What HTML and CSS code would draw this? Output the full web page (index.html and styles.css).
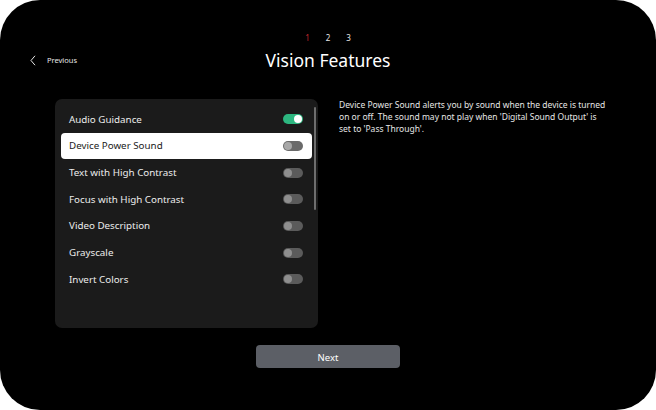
FILE: index.html
```html
<!DOCTYPE html>
<html>
<head>
<meta charset="utf-8">
<link rel="stylesheet" href="styles.css">
</head>
<body>
<div class="screen">
  <div class="steps">
    <span class="step active">1</span>
    <span class="step">2</span>
    <span class="step">3</span>
  </div>
  <div class="header">
    <div class="back">
      <svg class="chev" width="6" height="11" viewBox="0 0 6 11"><path d="M5 0.8 L1 5.5 L5 10.2" fill="none" stroke="#e6e6e6" stroke-width="1"/></svg>
      <span class="back-label">Previous</span>
    </div>
    <h1 class="title">Vision Features</h1>
    <div></div>
  </div>
  <div class="main">
    <div class="panel">
      <div class="row"><span class="label">Audio Guidance</span><span class="toggle on"></span></div>
      <div class="row focused"><span class="label">Device Power Sound</span><span class="toggle"></span></div>
      <div class="row"><span class="label">Text with High Contrast</span><span class="toggle"></span></div>
      <div class="row"><span class="label">Focus with High Contrast</span><span class="toggle"></span></div>
      <div class="row"><span class="label">Video Description</span><span class="toggle"></span></div>
      <div class="row"><span class="label">Grayscale</span><span class="toggle"></span></div>
      <div class="row"><span class="label">Invert Colors</span><span class="toggle"></span></div>
      <div class="scrollbar"></div>
    </div>
    <p class="desc">Device Power Sound alerts you by sound when the device is turned on or off. The sound may not play when 'Digital Sound Output' is set to 'Pass Through'.</p>
  </div>
  <div class="footer">
    <button class="next">Next</button>
  </div>
</div>
</body>
</html>
```

FILE: styles.css
```css
html, body {
  margin: 0;
  padding: 0;
  background: #ffffff;
}
body {
  font-family: "Noto Sans", "Open Sans", sans-serif;
}
.screen {
  width: 656px;
  height: 410px;
  background: #000000;
  border-radius: 40px;
  box-sizing: border-box;
  padding-top: 32px;
  display: flex;
  flex-direction: column;
  color: #ffffff;
}
.steps {
  display: flex;
  justify-content: center;
  gap: 16px;
  font-size: 8px;
  line-height: 12px;
  height: 12px;
  color: #e8e8e8;
}
.step.active {
  color: #c4262e;
}
.header {
  display: grid;
  grid-template-columns: 1fr auto 1fr;
  align-items: center;
  height: 32px;
  margin-top: 0;
}
.back {
  display: flex;
  align-items: center;
  padding-left: 30px;
  gap: 11px;
  color: #e6e6e6;
}
.chev {
  display: block;
}
.back-label {
  font-size: 7.5px;
}
.title {
  margin: 0;
  font-size: 17.5px;
  font-weight: 400;
  color: #ffffff;
  line-height: 32px;
}
.main {
  display: flex;
  margin-top: 23px;
  padding-left: 55px;
  gap: 21px;
}
.panel {
  position: relative;
  width: 263px;
  height: 229px;
  box-sizing: border-box;
  background: #1b1b1b;
  border-radius: 7px;
  padding: 7px 6px;
}
.row {
  height: 26.67px;
  display: flex;
  align-items: center;
  justify-content: space-between;
  padding: 0 9px 0 8px;
  border-radius: 4px;
  color: #ececec;
  font-size: 9.8px;
}
.row.focused {
  background: #ffffff;
  color: #1a1a1a;
}
.toggle {
  position: relative;
  width: 20px;
  height: 10px;
  border-radius: 5px;
  background: #5b5b5b;
}
.toggle::after {
  content: "";
  position: absolute;
  left: 1px;
  top: 1px;
  width: 8px;
  height: 8px;
  border-radius: 50%;
  background: #8f8f8f;
}
.toggle.on {
  background: #2db780;
}
.toggle.on::after {
  left: 11px;
  background: #ffffff;
}
.row.focused .toggle {
  background: #6a6a6a;
}
.row.focused .toggle::after {
  background: #a8a8a8;
}
.scrollbar {
  position: absolute;
  right: 2px;
  top: 8px;
  width: 2px;
  height: 103px;
  border-radius: 1px;
  background: #6e6e6e;
}
.desc {
  margin: 0;
  width: 269px;
  font-size: 8.5px;
  line-height: 12px;
  color: #e6e6e6;
}
.footer {
  display: flex;
  justify-content: center;
  margin-top: 17px;
}
.next {
  width: 144px;
  height: 23px;
  border: none;
  border-radius: 4px;
  background: #5c5f66;
  color: #ffffff;
  font-family: inherit;
  font-size: 9.5px;
  padding: 0;
  padding-top: 1px;
}
```
